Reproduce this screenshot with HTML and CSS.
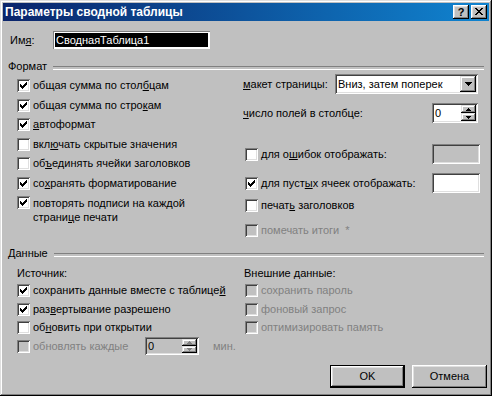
FILE: index.html
```html
<!DOCTYPE html>
<html lang="ru">
<head>
<meta charset="utf-8">
<title>Параметры сводной таблицы</title>
<link rel="stylesheet" href="styles.css">
</head>
<body>
<div class="window">
  <div class="titlebar">
    <span class="title">Параметры сводной таблицы</span>
    <div class="tbtns">
      <span class="tbtn help">?</span>
      <span class="tbtn"><svg width="8" height="7" viewBox="0 0 8 7"><path d="M0 0h2v1H0zM6 0h2v1H6zM1 1h2v1H1zM5 1h2v1H5zM2 2h4v1H2zM3 3h2v1H3zM2 4h4v1H2zM1 5h2v1H1zM5 5h2v1H5zM0 6h2v1H0zM6 6h2v1H6z"/></svg></span>
    </div>
  </div>
  <div class="content">
    <div class="name-row">
      <span class="name-label">Им<u>я</u>:</span>
      <div class="name-input">СводнаяТаблица1</div>
    </div>

    <div class="group-head"><span>Формат</span></div>
    <div class="cols format">
      <div class="col-left">
        <div class="cbrow"><span class="cb"><svg width="13" height="13" viewBox="0 0 13 13"><path d="M3 5h1v3H3zM4 6h1v3H4zM5 7h1v3H5zM6 6h1v3H6zM7 5h1v3H7zM8 4h1v3H8zM9 3h1v3H9z"/></svg></span><span>общая сумма по стол<u>б</u>цам</span></div>
        <div class="cbrow"><span class="cb"><svg width="13" height="13" viewBox="0 0 13 13"><path d="M3 5h1v3H3zM4 6h1v3H4zM5 7h1v3H5zM6 6h1v3H6zM7 5h1v3H7zM8 4h1v3H8zM9 3h1v3H9z"/></svg></span><span>общая сумма по стро<u>к</u>ам</span></div>
        <div class="cbrow"><span class="cb"><svg width="13" height="13" viewBox="0 0 13 13"><path d="M3 5h1v3H3zM4 6h1v3H4zM5 7h1v3H5zM6 6h1v3H6zM7 5h1v3H7zM8 4h1v3H8zM9 3h1v3H9z"/></svg></span><span><u>а</u>втоформат</span></div>
        <div class="cbrow"><span class="cb"></span><span>вкл<u>ю</u>чать скрытые значения</span></div>
        <div class="cbrow"><span class="cb"></span><span>об<u>ъ</u>единять ячейки заголовков</span></div>
        <div class="cbrow"><span class="cb"><svg width="13" height="13" viewBox="0 0 13 13"><path d="M3 5h1v3H3zM4 6h1v3H4zM5 7h1v3H5zM6 6h1v3H6zM7 5h1v3H7zM8 4h1v3H8zM9 3h1v3H9z"/></svg></span><span>со<u>х</u>ранять форматирование</span></div>
        <div class="cbrow multi"><span class="cb"><svg width="13" height="13" viewBox="0 0 13 13"><path d="M3 5h1v3H3zM4 6h1v3H4zM5 7h1v3H5zM6 6h1v3H6zM7 5h1v3H7zM8 4h1v3H8zM9 3h1v3H9z"/></svg></span><span class="ml">повторять подписи на каждой<br>страни<u>ц</u>е печати</span></div>
      </div>
      <div class="col-right">
        <div class="field-row r1">
          <span class="flabel w92"><u>м</u>акет страницы:</span>
          <div class="combo"><span class="combo-text">Вниз, затем поперек</span><span class="combo-btn"><svg width="7" height="4" viewBox="0 0 7 4"><path d="M0 0h7v1H6v1H5v1H4v1H3V3H2V2H1V1H0z"/></svg></span></div>
        </div>
        <div class="field-row r2">
          <span class="flabel w189"><u>ч</u>исло полей в столбце:</span>
          <div class="spin"><span class="spin-text">0</span><span class="spin-btns"><span class="sbtn"><svg width="5" height="3" viewBox="0 0 5 3"><path d="M2 0h1v1h1v1h1v1H0V2h1V1h1z"/></svg></span><span class="sbtn"><svg width="5" height="3" viewBox="0 0 5 3"><path d="M0 0h5v1H4v1H3v1H2V2H1V1H0z"/></svg></span></span></div>
        </div>
        <div class="field-row r3">
          <span class="flabel w189 chk"><span class="cb"></span><span>для о<u>ш</u>ибок отображать:</span></span>
          <div class="tbox dis"></div>
        </div>
        <div class="field-row r4">
          <span class="flabel w189 chk"><span class="cb"><svg width="13" height="13" viewBox="0 0 13 13"><path d="M3 5h1v3H3zM4 6h1v3H4zM5 7h1v3H5zM6 6h1v3H6zM7 5h1v3H7zM8 4h1v3H8zM9 3h1v3H9z"/></svg></span><span>для пуст<u>ы</u>х ячеек отображать:</span></span>
          <div class="tbox"></div>
        </div>
        <div class="cbrow r5"><span class="cb"></span><span>печат<u>ь</u> заголовков</span></div>
        <div class="cbrow r6 disabled"><span class="cb dis"></span><span>помечать итоги &nbsp;*</span></div>
      </div>
    </div>

    <div class="group-head data-head"><span>Данные</span></div>
    <div class="cols data">
      <div class="col-left">
        <div class="sublabel">Источник:</div>
        <div class="cbrow sm"><span class="cb"><svg width="13" height="13" viewBox="0 0 13 13"><path d="M3 5h1v3H3zM4 6h1v3H4zM5 7h1v3H5zM6 6h1v3H6zM7 5h1v3H7zM8 4h1v3H8zM9 3h1v3H9z"/></svg></span><span>сохранить данные вместе с таблице<u>й</u></span></div>
        <div class="cbrow sm"><span class="cb"><svg width="13" height="13" viewBox="0 0 13 13"><path d="M3 5h1v3H3zM4 6h1v3H4zM5 7h1v3H5zM6 6h1v3H6zM7 5h1v3H7zM8 4h1v3H8zM9 3h1v3H9z"/></svg></span><span>раз<u>в</u>ертывание разрешено</span></div>
        <div class="cbrow sm"><span class="cb"></span><span>об<u>н</u>овить при открытии</span></div>
        <div class="cbrow sm disabled"><span class="cb dis"></span><span class="every">обновлять каждые</span>
          <div class="spin small dis"><span class="spin-text">0</span><span class="spin-btns"><span class="sbtn"><svg width="5" height="3" viewBox="0 0 5 3"><path d="M2 0h1v1h1v1h1v1H0V2h1V1h1z"/></svg></span><span class="sbtn"><svg width="5" height="3" viewBox="0 0 5 3"><path d="M0 0h5v1H4v1H3v1H2V2H1V1H0z"/></svg></span></span></div>
          <span class="min">мин.</span>
        </div>
      </div>
      <div class="col-right">
        <div class="sublabel ext">Внешние данные:</div>
        <div class="cbrow sm disabled"><span class="cb dis"></span><span>сохранить пароль</span></div>
        <div class="cbrow sm disabled"><span class="cb dis"></span><span>фоновый запрос</span></div>
        <div class="cbrow sm disabled"><span class="cb dis"></span><span>оптимизировать память</span></div>
      </div>
    </div>

    <div class="btnrow">
      <span class="btn default">OK</span>
      <span class="btn">Отмена</span>
    </div>
  </div>
</div>
</body>
</html>
```

FILE: styles.css
```css
* { box-sizing: border-box; }
html, body { margin: 0; padding: 0; }
body {
  width: 492px;
  height: 396px;
  overflow: hidden;
  background: #c0c0c0;
  font-family: "Liberation Sans", Arial, sans-serif;
  font-size: 11px;
  line-height: 13px;
  color: #000;
}
u { text-underline-offset: 1px; }

.window {
  width: 492px;
  height: 396px;
  padding: 3px;
  background: #c0c0c0;
  box-shadow: inset -1px -1px #000, inset 1px 1px #dfdfdf, inset -2px -2px #808080, inset 2px 2px #fff;
  display: flex;
  flex-direction: column;
}

.titlebar {
  flex: none;
  height: 18px;
  display: flex;
  align-items: center;
  padding: 0 2px 0 2px;
  background: linear-gradient(to right, #0a246a, #1084d0);
  color: #fff;
  font-weight: bold;
  font-size: 12px;
}
.tbtns { margin-left: auto; display: flex; gap: 2px; }
.tbtn {
  width: 16px;
  height: 14px;
  background: #c0c0c0;
  box-shadow: inset -1px -1px #000, inset 1px 1px #fff, inset -2px -2px #808080, inset 2px 2px #dfdfdf;
  display: flex;
  align-items: center;
  justify-content: center;
  color: #000;
}
.tbtn svg { display: block; margin-top: -1px; }
.tbtn.help { font-size: 11px; font-weight: bold; line-height: 12px; padding-bottom: 1px; }

.content {
  flex: 1;
  padding: 0 5px;
  display: flex;
  flex-direction: column;
}

/* name row */
.name-row { display: flex; align-items: center; margin-top: 10px; height: 18px; }
.name-label { width: 45px; padding-left: 2px; }
.name-input {
  width: 157px;
  height: 18px;
  background: #000;
  color: #fff;
  padding-left: 3px;
  display: flex;
  align-items: center;
  box-shadow: inset 1px 1px #808080, inset -1px -1px #fff, inset 0 0 0 2px #fff;
}

/* group header */
.group-head {
  display: flex;
  align-items: center;
  height: 14px;
  margin-top: 10px;
}
.group-head span { padding-right: 6px; }
.group-head::after {
  content: "";
  flex: 1;
  height: 2px;
  margin-top: 3px;
  border-top: 1px solid #808080;
  border-bottom: 1px solid #fff;
}
.data-head { margin-top: 6px; }

.cols { display: flex; }
.col-left { width: 235px; padding-left: 9px; }
.format .col-left { padding-top: 3px; }
.col-right { width: 237px; }

/* checkbox rows */
.cbrow { display: flex; align-items: center; height: 19.5px; }
.cbrow.multi { align-items: flex-start; height: auto; }
.cbrow.multi .cb { margin-top: 3.25px; }
.cbrow.multi .ml { line-height: 14px; margin-top: 2.75px; }
.cbrow.sm { height: 18.5px; }

.cb {
  width: 13px;
  height: 13px;
  flex: none;
  background: #fff;
  box-shadow: inset 1px 1px #808080, inset -1px -1px #fff, inset 2px 2px #404040, inset -2px -2px #dfdfdf;
  margin-right: 3px;
}
.cb svg { display: block; }
.cb.dis { background: #c0c0c0; }
.disabled { color: #808080; }

/* right column of format */
.field-row { display: flex; align-items: center; height: 20px; }
.r1 { margin-top: 1px; }
.r2 { margin-top: 9px; }
.r3 { margin-top: 21px; }
.r4 { margin-top: 9px; }
.r5 { margin-top: 3px; padding-left: 2px; }
.r6 { margin-top: 5px; padding-left: 2px; }
.flabel { flex: none; }
.w92 { width: 92px; }
.w189 { width: 189px; }
.flabel.chk { display: flex; align-items: center; padding-left: 2px; }

.combo {
  width: 143px;
  height: 20px;
  background: #fff;
  box-shadow: inset 1px 1px #808080, inset -1px -1px #fff, inset 2px 2px #404040, inset -2px -2px #dfdfdf;
  display: flex;
  align-items: center;
  padding-left: 3px;
}
.combo-btn {
  margin-left: auto;
  margin-right: 2px;
  width: 16px;
  height: 16px;
  background: #c0c0c0;
  box-shadow: inset -1px -1px #000, inset 1px 1px #dfdfdf, inset -2px -2px #808080, inset 2px 2px #fff;
  display: flex;
  align-items: center;
  justify-content: center;
}
.combo-btn svg { display: block; }

.spin {
  width: 46px;
  height: 20px;
  background: #fff;
  box-shadow: inset 1px 1px #808080, inset -1px -1px #fff, inset 2px 2px #404040, inset -2px -2px #dfdfdf;
  display: flex;
  padding: 2px;
}
.spin-text { flex: 1; padding-left: 1px; display: flex; align-items: center; color: #000; }
.spin-btns { width: 15px; display: flex; flex-direction: column; }
.sbtn {
  flex: 1;
  background: #c0c0c0;
  box-shadow: inset -1px -1px #000, inset 1px 1px #dfdfdf, inset -2px -2px #808080, inset 2px 2px #fff;
  display: flex;
  align-items: center;
  justify-content: center;
}
.sbtn svg { display: block; }
.spin.dis { background: #c0c0c0; }
.spin.dis .sbtn svg { fill: #808080; }
.spin.small { width: 54px; height: 18px; }

.tbox {
  width: 48px;
  height: 20px;
  background: #fff;
  box-shadow: inset 1px 1px #808080, inset -1px -1px #fff, inset 2px 2px #404040, inset -2px -2px #dfdfdf;
}
.tbox.dis { background: #c0c0c0; }

/* data section */
.data .col-left, .data .col-right { padding-top: 6px; }
.data .col-right { padding-left: 1px; }
.sublabel { line-height: 14px; margin-bottom: 1.5px; }
.data .col-right .cbrow { padding-left: 1px; }
.every { width: 112px; flex: none; }
.min { margin-left: 14px; }

/* buttons */
.btnrow {
  display: flex;
  justify-content: flex-end;
  gap: 7px;
  margin-top: 9.5px;
  margin-right: -3px;
}
.btn {
  width: 75px;
  height: 23px;
  display: flex;
  align-items: center;
  justify-content: center;
  background: #c0c0c0;
  box-shadow: inset -1px -1px #000, inset 1px 1px #fff, inset -2px -2px #808080, inset 2px 2px #dfdfdf;
}
.btn.default {
  border: 1px solid #000;
  box-shadow: inset -1px -1px #000, inset 1px 1px #fff, inset -2px -2px #808080, inset 2px 2px #dfdfdf;
}
```
